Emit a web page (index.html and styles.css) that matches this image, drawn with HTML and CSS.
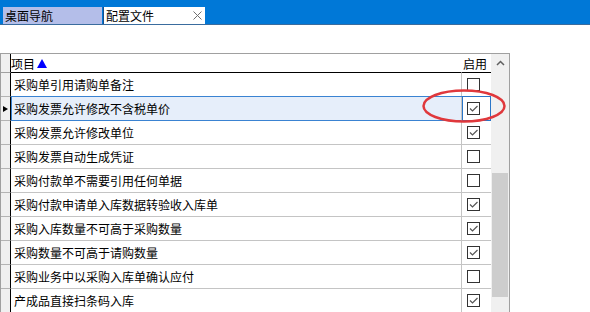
FILE: index.html
```html
<!DOCTYPE html>
<html lang="zh-CN">
<head>
<meta charset="utf-8">
<title>配置文件</title>
<link rel="stylesheet" href="styles.css">
</head>
<body>
<div class="app">
  <div class="tabbar">
    <div class="tab tab-nav">桌面导航</div>
    <div class="tab tab-active">配置文件<svg class="close" width="9" height="9" viewBox="0 0 9 9"><path d="M0.5 0.5 L8.5 8.5 M8.5 0.5 L0.5 8.5" stroke="#707070" stroke-width="1" fill="none"/></svg></div>
  </div>
  <div class="grid">
    <div class="table">
      <div class="row head">
        <div class="rh"></div>
        <div class="name">项目<span class="sort"></span></div>
        <div class="chk">启用</div>
      </div>
      <div class="row"><div class="rh"></div><div class="name">采购单引用请购单备注</div><div class="chk"><span class="box"></span></div></div>
      <div class="row sel"><div class="rh"><span class="cur"></span></div><div class="name">采购发票允许修改不含税单价</div><div class="chk"><span class="box on"><svg width="11" height="11" viewBox="0 0 11 11"><path d="M2 5.5 L4.5 8 L9.5 3" stroke="#555" stroke-width="1.2" fill="none"/></svg></span></div></div>
      <div class="row"><div class="rh"></div><div class="name">采购发票允许修改单位</div><div class="chk"><span class="box on"><svg width="11" height="11" viewBox="0 0 11 11"><path d="M2 5.5 L4.5 8 L9.5 3" stroke="#555" stroke-width="1.2" fill="none"/></svg></span></div></div>
      <div class="row"><div class="rh"></div><div class="name">采购发票自动生成凭证</div><div class="chk"><span class="box"></span></div></div>
      <div class="row"><div class="rh"></div><div class="name">采购付款单不需要引用任何单据</div><div class="chk"><span class="box"></span></div></div>
      <div class="row"><div class="rh"></div><div class="name">采购付款申请单入库数据转验收入库单</div><div class="chk"><span class="box on"><svg width="11" height="11" viewBox="0 0 11 11"><path d="M2 5.5 L4.5 8 L9.5 3" stroke="#555" stroke-width="1.2" fill="none"/></svg></span></div></div>
      <div class="row"><div class="rh"></div><div class="name">采购入库数量不可高于采购数量</div><div class="chk"><span class="box on"><svg width="11" height="11" viewBox="0 0 11 11"><path d="M2 5.5 L4.5 8 L9.5 3" stroke="#555" stroke-width="1.2" fill="none"/></svg></span></div></div>
      <div class="row"><div class="rh"></div><div class="name">采购数量不可高于请购数量</div><div class="chk"><span class="box on"><svg width="11" height="11" viewBox="0 0 11 11"><path d="M2 5.5 L4.5 8 L9.5 3" stroke="#555" stroke-width="1.2" fill="none"/></svg></span></div></div>
      <div class="row"><div class="rh"></div><div class="name">采购业务中以采购入库单确认应付</div><div class="chk"><span class="box"></span></div></div>
      <div class="row"><div class="rh"></div><div class="name">产成品直接扫条码入库</div><div class="chk"><span class="box on"><svg width="11" height="11" viewBox="0 0 11 11"><path d="M2 5.5 L4.5 8 L9.5 3" stroke="#555" stroke-width="1.2" fill="none"/></svg></span></div></div>
    </div>
    <div class="scrollbar">
      <div class="sb-btn"><svg width="9" height="6" viewBox="0 0 9 6"><path d="M1 5 L4.5 1.5 L8 5" stroke="#606060" stroke-width="1.5" fill="none"/></svg></div>
      <div class="sb-track"><div class="sb-thumb"></div></div>
    </div>
  </div>
  <svg class="annot" width="90" height="38" viewBox="0 0 90 38"><ellipse cx="45" cy="19" rx="40.5" ry="15.5" stroke="#e0383c" stroke-width="2.5" fill="none"/></svg>
</div>
</body>
</html>
```

FILE: styles.css
```css
* { box-sizing: border-box; }
html, body { margin: 0; padding: 0; background: #fff; }
body {
  width: 590px;
  height: 312px;
  overflow: hidden;
  font-family: "Noto Sans CJK SC", "Noto Sans", sans-serif;
  font-size: 12px;
  color: #000;
}
.app { position: relative; width: 590px; height: 312px; overflow: hidden; }

.tabbar {
  height: 25px;
  background: #0078d7;
  border-bottom: 1px solid #3a6c9e;
  display: flex;
  align-items: flex-end;
  padding-left: 3px;
}
.tab {
  height: 17px;
  line-height: 17px;
  padding-left: 2px;
  white-space: nowrap;
}
.tab-nav { width: 99px; background: #b4bee9; }
.tab-active {
  width: 102px;
  margin-left: 1px;
  background: #fff;
  border-left: 1px solid #1d4e86;
  display: flex;
  align-items: center;
}
.close { margin-left: 39px; }

.grid {
  margin-top: 28px;
  width: 510px;
  height: 259px;
  border-top: 1px solid #a0a0a0;
  border-left: 1px solid #a0a0a0;
  border-right: 1px solid #a0a0a0;
  display: flex;
}
.table { flex: 1; display: flex; flex-direction: column; }
.row { display: flex; height: 24px; flex: none; }
.row.head { height: 19px; }
.rh {
  width: 10px;
  background: #f0f0f0;
  border-right: 1px solid #000;
  border-bottom: 1px solid #b4b4b4;
  display: flex;
  align-items: center;
  justify-content: center;
}
.name {
  flex: 1;
  padding-left: 3px;
  border-bottom: 1px solid #c4c4c4;
  display: flex;
  align-items: center;
  position: relative;
  white-space: nowrap;
}
.chk {
  width: 30px;
  border-left: 1px solid #c4c4c4;
  border-bottom: 1px solid #c4c4c4;
  padding-left: 5px;
  display: flex;
  align-items: center;
  position: relative;
}
.head .name { padding-left: 0; border-bottom-color: #000; }
.head .chk { padding-left: 1px; border-left-color: transparent; border-bottom-color: #000; }
.head .rh { border-bottom-color: #a0a0a0; }
.sort {
  width: 0;
  height: 0;
  margin-left: 2px;
  border-left: 5px solid transparent;
  border-right: 5px solid transparent;
  border-bottom: 9px solid #0000ff;
}
.box {
  width: 13px;
  height: 13px;
  border: 1px solid #333;
  background: #fff;
  display: flex;
  align-items: center;
  justify-content: center;
}
.cur {
  width: 0;
  height: 0;
  border-left: 5px solid #000;
  border-top: 3.5px solid transparent;
  border-bottom: 3.5px solid transparent;
}
.sel .name { background: #e6eefa; }
.sel .name::after {
  content: "";
  position: absolute;
  top: -1px;
  left: 0;
  right: -1px;
  bottom: -1px;
  border: 1px solid #3a83d2;
}
.sel .chk::after {
  content: "";
  position: absolute;
  top: -1px;
  left: 0;
  right: 0;
  bottom: -1px;
  border: 1px solid #2a76c8;
}

.scrollbar {
  width: 18px;
  background: #f0f0f0;
  display: flex;
  flex-direction: column;
}
.sb-btn {
  height: 18px;
  display: flex;
  align-items: center;
  justify-content: center;
}
.sb-track { flex: 1; padding: 101px 1px 0 1px; }
.sb-thumb { height: 124px; background: #cdcdcd; }

.annot {
  position: absolute;
  left: 419px;
  top: 87px;
}
```
